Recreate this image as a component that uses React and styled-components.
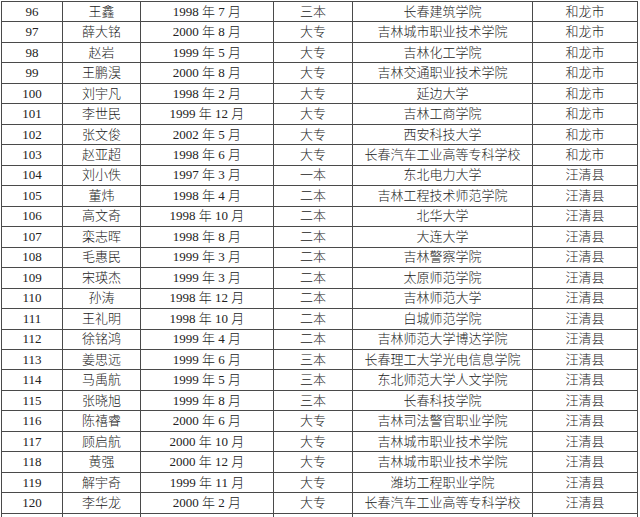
import React from "react";
import styled, { createGlobalStyle } from "styled-components";

const Global = createGlobalStyle`
  html, body { margin: 0; padding: 0; background: #fff; }
  body { overflow: hidden; }
`;

const rows = [
  ["96", "王鑫", "1998 年 7 月", "三本", "长春建筑学院", "和龙市"],
  ["97", "薛大铭", "2000 年 8 月", "大专", "吉林城市职业技术学院", "和龙市"],
  ["98", "赵岩", "1999 年 5 月", "大专", "吉林化工学院", "和龙市"],
  ["99", "王鹏淏", "2000 年 8 月", "大专", "吉林交通职业技术学院", "和龙市"],
  ["100", "刘宇凡", "1998 年 2 月", "大专", "延边大学", "和龙市"],
  ["101", "李世民", "1999 年 12 月", "大专", "吉林工商学院", "和龙市"],
  ["102", "张文俊", "2002 年 5 月", "大专", "西安科技大学", "和龙市"],
  ["103", "赵亚超", "1998 年 6 月", "大专", "长春汽车工业高等专科学校", "和龙市"],
  ["104", "刘小佚", "1997 年 3 月", "一本", "东北电力大学", "汪清县"],
  ["105", "董炜", "1998 年 4 月", "二本", "吉林工程技术师范学院", "汪清县"],
  ["106", "高文奇", "1998 年 10 月", "二本", "北华大学", "汪清县"],
  ["107", "栾志晖", "1998 年 8 月", "二本", "大连大学", "汪清县"],
  ["108", "毛惠民", "1999 年 3 月", "二本", "吉林警察学院", "汪清县"],
  ["109", "宋瑛杰", "1999 年 3 月", "二本", "太原师范学院", "汪清县"],
  ["110", "孙涛", "1998 年 12 月", "二本", "吉林师范大学", "汪清县"],
  ["111", "王礼明", "1998 年 10 月", "二本", "白城师范学院", "汪清县"],
  ["112", "徐铭鸿", "1999 年 4 月", "二本", "吉林师范大学博达学院", "汪清县"],
  ["113", "姜思远", "1999 年 6 月", "三本", "长春理工大学光电信息学院", "汪清县"],
  ["114", "马禹航", "1999 年 5 月", "三本", "东北师范大学人文学院", "汪清县"],
  ["115", "张晓旭", "1999 年 8 月", "三本", "长春科技学院", "汪清县"],
  ["116", "陈禧睿", "2000 年 6 月", "大专", "吉林司法警官职业学院", "汪清县"],
  ["117", "顾启航", "2000 年 10 月", "大专", "吉林城市职业技术学院", "汪清县"],
  ["118", "黄强", "2000 年 12 月", "大专", "吉林城市职业技术学院", "汪清县"],
  ["119", "解宇奇", "1999 年 11 月", "大专", "潍坊工程职业学院", "汪清县"],
  ["120", "李华龙", "2000 年 2 月", "大专", "长春汽车工业高等专科学校", "汪清县"],
  ["", "", "", "", "", ""],
];

const widths = [61, 78, 133, 79, 180, 105];

const Page = styled.div`
  width: 640px;
  height: 517px;
  overflow: hidden;
  padding: 1px 0 0 1px;
  box-sizing: border-box;
`;

const Table = styled.table`
  border-collapse: collapse;
  table-layout: fixed;
  width: 637px;
  font-family: "Liberation Serif", "Noto Sans CJK SC", serif;
  font-size: 13px;
  font-weight: 300;
  color: #222;
`;

const Row = styled.tr`
  height: 20.48px;
`;

const Cell = styled.td`
  border: 1px solid #4a4a4a;
  padding: 0;
  text-align: center;
  vertical-align: middle;
  white-space: nowrap;
  line-height: 18px;
`;

export default function App() {
  return (
    <>
      <Global />
      <Page>
        <Table>
          <colgroup>
            {widths.map((w, i) => (
              <col key={i} style={{ width: w }} />
            ))}
          </colgroup>
          <tbody>
            {rows.map((r, i) => (
              <Row key={i}>
                {r.map((c, j) => (
                  <Cell key={j}>{c}</Cell>
                ))}
              </Row>
            ))}
          </tbody>
        </Table>
      </Page>
    </>
  );
}
